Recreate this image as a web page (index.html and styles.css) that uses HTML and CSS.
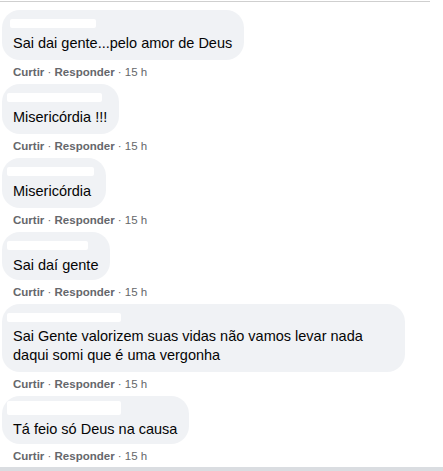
FILE: index.html
```html
<!DOCTYPE html>
<html lang="pt-BR">
<head>
    <meta charset="UTF-8">
    <meta name="viewport" content="width=device-width, initial-scale=1.0">
    <title>Comentários</title>
    <link rel="stylesheet" href="styles.css">
</head>
<body>
    <div class="topline"></div>
    <div class="comments">
        <div class="comment">
            <div class="bubble">
                <div class="author"><span class="blur w86"></span></div>
                <p class="text">Sai dai gente...pelo amor de Deus</p>
            </div>
            <div class="actions"><b>Curtir</b> · <b>Responder</b> · 15 h</div>
        </div>

        <div class="comment">
            <div class="bubble">
                <div class="author"><span class="blur w95 shift"></span></div>
                <p class="text">Misericórdia !!!</p>
            </div>
            <div class="actions"><b>Curtir</b> · <b>Responder</b> · 15 h</div>
        </div>

        <div class="comment">
            <div class="bubble">
                <div class="author"><span class="blur w87 shift"></span></div>
                <p class="text">Misericórdia</p>
            </div>
            <div class="actions"><b>Curtir</b> · <b>Responder</b> · 15 h</div>
        </div>

        <div class="comment">
            <div class="bubble short">
                <div class="author"><span class="blur w81 shift"></span></div>
                <p class="text">Sai daí gente</p>
            </div>
            <div class="actions"><b>Curtir</b> · <b>Responder</b> · 15 h</div>
        </div>

        <div class="comment">
            <div class="bubble wide">
                <div class="author"><span class="blur w114 shift"></span></div>
                <p class="text multi">Sai Gente valorizem suas vidas não vamos levar nada<br>daqui somi que é uma vergonha</p>
            </div>
            <div class="actions"><b>Curtir</b> · <b>Responder</b> · 15 h</div>
        </div>

        <div class="comment">
            <div class="bubble short">
                <div class="author"><span class="blur w114 shift tall"></span></div>
                <p class="text">Tá feio só Deus na causa</p>
            </div>
            <div class="actions"><b>Curtir</b> · <b>Responder</b> · 15 h</div>
        </div>
    </div>
    <div class="bottombar"></div>
</body>
</html>
```

FILE: styles.css
```css
body{
    margin: 0;
    background-color: #fff;
    font-family: "Liberation Sans", Arial, sans-serif;
    color: #050505;
    width: 443px;
    height: 471px;
    overflow: hidden;
    position: relative;
}
.topline{
    margin-top: 1px;
    width: 430px;
    height: 1px;
    background-color: #cfcfcf;
}
.comments{
    padding: 8px 0 0 2px;
}
.bubble{
    display: inline-block;
    background-color: #f0f2f5;
    border-radius: 18px;
    padding: 7px 12px 7px 11px;
}
.bubble.short{
    padding-bottom: 5px;
}
.bubble.wide{
    width: 380px;
}
.author{
    height: 16px;
    line-height: 16px;
}
.blur{
    display: inline-block;
    vertical-align: top;
    margin-top: 2px;
    height: 9px;
    background-color: #fff;
    border-radius: 2px;
    margin-left: -3px;
}
.blur.shift{
    margin-left: -6px;
}
.blur.tall{
    height: 14px;
    margin-top: -2px;
}
.w86{ width: 86px; }
.w95{ width: 95px; }
.w87{ width: 87px; }
.w81{ width: 81px; }
.w114{ width: 114px; }
.text{
    margin: 0;
    font-size: 14.5px;
    line-height: 20px;
}
.text.multi{
    line-height: 19px;
}
.actions{
    padding: 4px 0 4px 11px;
    height: 16px;
    line-height: 16px;
    font-size: 11.5px;
    color: #65676b;
}
.actions b{
    font-weight: 700;
}
.bottombar{
    position: absolute;
    left: 0;
    bottom: 0;
    width: 100%;
    height: 4px;
    background-color: #dadde1;
}
```
